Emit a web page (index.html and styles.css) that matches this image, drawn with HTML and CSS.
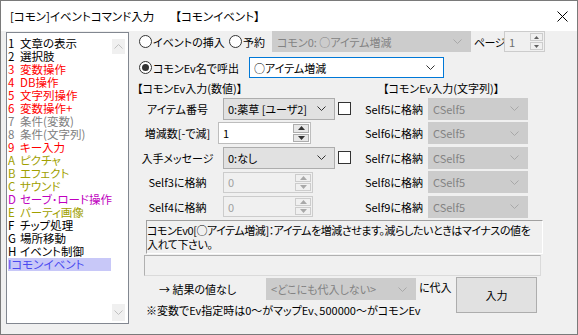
FILE: index.html
```html
<!DOCTYPE html>
<html lang="ja">
<head>
<meta charset="utf-8">
<link rel="stylesheet" href="styles.css">
</head>
<body>
<div class="window">
  <div class="titlebar">
    <span class="title">[コモン]イベントコマンド入力</span>
    <span class="title2">【コモンイベント】</span>
    <svg class="close" width="11" height="11" viewBox="0 0 11 11"><path d="M0.5 0.5 L10.5 10.5 M10.5 0.5 L0.5 10.5" stroke="#000" stroke-width="1" fill="none"/></svg>
  </div>
  <div class="body">
    <div class="list">
      <div class="items">
        <div class="item c-black"><span class="k">1</span>文章の表示</div>
        <div class="item c-black"><span class="k">2</span>選択肢</div>
        <div class="item c-red"><span class="k">3</span>変数操作</div>
        <div class="item c-red"><span class="k">4</span>DB操作</div>
        <div class="item c-red"><span class="k">5</span>文字列操作</div>
        <div class="item c-red"><span class="k">6</span>変数操作+</div>
        <div class="item c-gray"><span class="k">7</span>条件(変数)</div>
        <div class="item c-gray"><span class="k">8</span>条件(文字列)</div>
        <div class="item c-red"><span class="k">9</span>キー入力</div>
        <div class="item c-olive"><span class="k">A</span>ピクチャ</div>
        <div class="item c-olive"><span class="k">B</span>エフェクト</div>
        <div class="item c-olive"><span class="k">C</span>サウンド</div>
        <div class="item c-mag"><span class="k">D</span>セーブ･ロード操作</div>
        <div class="item c-olive"><span class="k">E</span>パーティ画像</div>
        <div class="item c-black"><span class="k">F</span>チップ処理</div>
        <div class="item c-black"><span class="k">G</span>場所移動</div>
        <div class="item c-black"><span class="k">H</span>イベント制御</div>
        <div class="item sel">Iコモンイベント</div>
      </div>
      <div class="scrollbar">
        <div class="sbtn sbtn-top"><svg width="9" height="5" viewBox="0 0 9 5"><path d="M0.5 4.5 L4.5 0.5 L8.5 4.5" stroke="#c0c0c0" fill="none"/></svg></div>
        <div class="sbtn sbtn-bot"><svg width="9" height="5" viewBox="0 0 9 5"><path d="M0.5 0.5 L4.5 4.5 L8.5 0.5" stroke="#c0c0c0" fill="none"/></svg></div>
      </div>
    </div>

    <div class="main">
      <div class="row1">
        <span class="radio"></span>
        <span class="lbl lbl-insert">イベントの挿入</span>
        <span class="radio radio2"></span>
        <span class="lbl lbl-yoyaku">予約</span>
        <div class="combo dis combo-top">
          <span>コモン0: ○アイテム増減</span>
          <svg width="9" height="5" viewBox="0 0 9 5"><path d="M0.5 0.5 L4.5 4.5 L8.5 0.5" stroke="#a8a8a8" fill="none"/></svg>
        </div>
        <span class="lbl lbl-page">ページ</span>
        <div class="spin spin-page">
          <span class="spin-field">1</span>
          <div class="spin-btns">
            <span class="sb"><svg width="5" height="3" viewBox="0 0 5 3"><path d="M2.5 0 L5 3 L0 3 Z" fill="#606060"/></svg></span>
            <span class="sb"><svg width="5" height="3" viewBox="0 0 5 3"><path d="M0 0 L5 0 L2.5 3 Z" fill="#606060"/></svg></span>
          </div>
        </div>
      </div>

      <div class="row2">
        <span class="radio checked"></span>
        <span class="lbl lbl-call">コモンEv名で呼出</span>
        <div class="combo focus combo-name">
          <span>○アイテム増減</span>
          <svg width="9" height="5" viewBox="0 0 9 5"><path d="M0.5 0.5 L4.5 4.5 L8.5 0.5" stroke="#333" fill="none"/></svg>
        </div>
      </div>

      <div class="headers">
        <span class="hdr-left">【コモンEv入力(数値)】</span>
        <span class="hdr-right">【コモンEv入力(文字列)】</span>
      </div>

      <div class="grid">
        <span class="glabel">アイテム番号</span>
        <div class="gctrl">
          <div class="combo en combo-mid">
            <span>0:薬草 [ユーザ2]</span>
            <svg width="9" height="5" viewBox="0 0 9 5"><path d="M0.5 0.5 L4.5 4.5 L8.5 0.5" stroke="#333" fill="none"/></svg>
          </div>
          <span class="check"></span>
        </div>
        <span class="rlabel">Self5に格納</span>
        <div class="combo dis combo-r"><span>CSelf5</span><svg width="9" height="5" viewBox="0 0 9 5"><path d="M0.5 0.5 L4.5 4.5 L8.5 0.5" stroke="#a8a8a8" fill="none"/></svg></div>

        <span class="glabel">増減数[-で減]</span>
        <div class="gctrl">
          <div class="spin spin-en">
            <span class="spin-field">1</span>
            <div class="spin-btns">
              <span class="sb"><svg width="7" height="4" viewBox="0 0 7 4"><path d="M3.5 0 L7 4 L0 4 Z" fill="#333"/></svg></span>
              <span class="sb"><svg width="7" height="4" viewBox="0 0 7 4"><path d="M0 0 L7 0 L3.5 4 Z" fill="#333"/></svg></span>
            </div>
          </div>
        </div>
        <span class="rlabel">Self6に格納</span>
        <div class="combo dis combo-r"><span>CSelf5</span><svg width="9" height="5" viewBox="0 0 9 5"><path d="M0.5 0.5 L4.5 4.5 L8.5 0.5" stroke="#a8a8a8" fill="none"/></svg></div>

        <span class="glabel">入手メッセージ</span>
        <div class="gctrl">
          <div class="combo en combo-mid">
            <span>0:なし</span>
            <svg width="9" height="5" viewBox="0 0 9 5"><path d="M0.5 0.5 L4.5 4.5 L8.5 0.5" stroke="#333" fill="none"/></svg>
          </div>
          <span class="check"></span>
        </div>
        <span class="rlabel">Self7に格納</span>
        <div class="combo dis combo-r"><span>CSelf5</span><svg width="9" height="5" viewBox="0 0 9 5"><path d="M0.5 0.5 L4.5 4.5 L8.5 0.5" stroke="#a8a8a8" fill="none"/></svg></div>

        <span class="glabel">Self3に格納</span>
        <div class="gctrl">
          <div class="spin spin-dis">
            <span class="spin-field">0</span>
            <div class="spin-btns">
              <span class="sb"><svg width="7" height="4" viewBox="0 0 7 4"><path d="M3.5 0 L7 4 L0 4 Z" fill="#a8a8a8"/></svg></span>
              <span class="sb"><svg width="7" height="4" viewBox="0 0 7 4"><path d="M0 0 L7 0 L3.5 4 Z" fill="#a8a8a8"/></svg></span>
            </div>
          </div>
        </div>
        <span class="rlabel">Self8に格納</span>
        <div class="combo dis combo-r"><span>CSelf5</span><svg width="9" height="5" viewBox="0 0 9 5"><path d="M0.5 0.5 L4.5 4.5 L8.5 0.5" stroke="#a8a8a8" fill="none"/></svg></div>

        <span class="glabel">Self4に格納</span>
        <div class="gctrl">
          <div class="spin spin-dis">
            <span class="spin-field">0</span>
            <div class="spin-btns">
              <span class="sb"><svg width="7" height="4" viewBox="0 0 7 4"><path d="M3.5 0 L7 4 L0 4 Z" fill="#a8a8a8"/></svg></span>
              <span class="sb"><svg width="7" height="4" viewBox="0 0 7 4"><path d="M0 0 L7 0 L3.5 4 Z" fill="#a8a8a8"/></svg></span>
            </div>
          </div>
        </div>
        <span class="rlabel">Self9に格納</span>
        <div class="combo dis combo-r"><span>CSelf5</span><svg width="9" height="5" viewBox="0 0 9 5"><path d="M0.5 0.5 L4.5 4.5 L8.5 0.5" stroke="#a8a8a8" fill="none"/></svg></div>
      </div>

      <div class="desc">コモンEv0[○アイテム増減]：アイテムを増減させます。減らしたいときはマイナスの値を<br>入れて下さい。</div>
      <div class="emptybox"></div>

      <div class="bottom">
        <div class="bottom-left">
          <div class="bline1">
            <span class="lbl lbl-result">→ 結果の値なし</span>
            <div class="combo dis combo-assign">
              <span>&lt;どこにも代入しない&gt;</span>
              <svg width="9" height="5" viewBox="0 0 9 5"><path d="M0.5 0.5 L4.5 4.5 L8.5 0.5" stroke="#a8a8a8" fill="none"/></svg>
            </div>
            <span class="lbl lbl-assign">に代入</span>
          </div>
          <div class="note">※変数でEv指定時は0～がマップEv、500000～がコモンEv</div>
        </div>
        <div class="button">入力</div>
      </div>
    </div>
  </div>
</div>
</body>
</html>
```

FILE: styles.css
```css
html, body {
  margin: 0;
  padding: 0;
  background: #ffffff;
}

.window {
  width: 578px;
  height: 335px;
  box-sizing: border-box;
  border: 1px solid #7a7a7a;
  display: flex;
  flex-direction: column;
  font-family: "Noto Sans CJK JP", "Noto Sans", sans-serif;
  font-size: 11px;
  color: #000;
  font-feature-settings: "palt";
  overflow: hidden;
}

.titlebar {
  height: 30px;
  flex: none;
  background: #fff;
  display: flex;
  align-items: center;
  padding-left: 9px;
  font-size: 11.5px;
}

.title2 {
  margin-left: 21px;
}

.close {
  margin-left: auto;
  margin-right: 9px;
  display: block;
}

.body {
  flex: 1;
  background: #f0f0f0;
  display: flex;
  padding-left: 5px;
}

/* ---------- list ---------- */
.list {
  width: 123px;
  height: 292px;
  margin-top: 1px;
  box-sizing: border-box;
  border: 1px solid #828790;
  background: #fff;
  display: flex;
  flex: none;
}

.items {
  width: 103px;
  margin-left: 1px;
  padding-top: 4px;
}

.item {
  height: 13px;
  line-height: 13px;
  white-space: nowrap;
  font-size: 11.5px;
}

.k {
  display: inline-block;
  width: 12px;
}

.c-black { color: #000; }
.c-red { color: #ff0000; }
.c-gray { color: #808080; }
.c-olive { color: #a0a000; }
.c-mag { color: #c000c0; }
.sel {
  background: #c8c8f8;
  color: #4a4af0;
}

.scrollbar {
  width: 17px;
  display: flex;
  flex-direction: column;
  justify-content: space-between;
}

.sbtn {
  width: 13px;
  height: 15px;
  margin-left: 1px;
  background: #f0f0f0;
  display: flex;
  align-items: center;
  justify-content: center;
}

.sbtn-top { margin-top: 6px; }
.sbtn-bot { margin-bottom: 2px; height: 17px; }

/* ---------- main ---------- */
.main {
  flex: 1;
  display: flex;
  flex-direction: column;
  padding-left: 8px;
}

.lbl {
  display: inline-block;
  white-space: nowrap;
  line-height: 16px;
}

.row1 {
  height: 21px;
  display: flex;
  align-items: center;
  padding-left: 2px;
}

.row2 {
  height: 21px;
  margin-top: 5px;
  display: flex;
  align-items: center;
  padding-left: 2px;
}

.radio {
  width: 13px;
  height: 13px;
  box-sizing: border-box;
  border: 1px solid #333;
  border-radius: 50%;
  background: #fff;
  flex: none;
  display: flex;
  align-items: center;
  justify-content: center;
}

.radio.checked::after {
  content: "";
  width: 7px;
  height: 7px;
  border-radius: 50%;
  background: #333;
}

.radio2 { margin-left: 2px; }

.lbl-insert { width: 74px; margin-left: 1px; }
.lbl-yoyaku { width: 26px; margin-left: 1px; }
.lbl-page { width: 29px; margin-left: 3px; letter-spacing: -0.6px; }
.lbl-call { width: 96px; margin-left: 1px; }

.combo {
  box-sizing: border-box;
  height: 21px;
  display: flex;
  align-items: center;
  justify-content: space-between;
  padding: 0 8px 0 4px;
  white-space: nowrap;
  flex: none;
}

.combo svg { display: block; flex: none; }

.combo.dis {
  background: #cccccc;
  border: 1px solid #cccccc;
  color: #838383;
}

.combo.en {
  background: #e1e1e1;
  border: 1px solid #adadad;
  color: #000;
}

.combo.focus {
  background: #fff;
  border: 1px solid #0078d7;
  color: #000;
}

.combo-top { width: 199px; margin-left: 3px; }
.combo-name { width: 195px; }
.combo-mid { width: 112px; height: 22px; margin-left: 5px; }
.combo-r { width: 100px; height: 22px; }
.combo-assign { width: 150px; height: 22px; }

.spin {
  box-sizing: border-box;
  display: flex;
  flex: none;
}

.spin-field {
  flex: 1;
  display: flex;
  align-items: center;
  padding-left: 4px;
}

.spin-btns {
  display: flex;
  flex-direction: column;
  justify-content: center;
  gap: 1px;
  padding: 1px 1px 1px 0;
}

.sb {
  box-sizing: border-box;
  flex: 1;
  display: flex;
  align-items: center;
  justify-content: center;
}

.sb svg { display: block; }

.spin-page {
  width: 41px;
  height: 21px;
  margin-left: 1px;
  border: 1px solid #cccccc;
  background: #f0f0f0;
  color: #6d6d6d;
}

.spin-page .sb {
  width: 13px;
  border: 1px solid #cccccc;
  background: #f0f0f0;
}

.spin-en {
  width: 93px;
  height: 22px;
  border: 1px solid #bdbdbd;
  background: #fff;
}

.spin-en .sb {
  width: 16px;
  border: 1px solid #adadad;
  background: #e8e8e8;
}

.spin-dis {
  width: 90px;
  height: 21px;
  margin-left: 5px;
  border: 1px solid #cccccc;
  background: #f0f0f0;
  color: #a0a0a0;
}

.spin-dis .sb {
  width: 16px;
  border: 1px solid #cccccc;
  background: #f0f0f0;
}

.headers {
  height: 20px;
  display: flex;
  align-items: center;
  white-space: nowrap;
}

.hdr-left { width: 246px; }

.grid {
  display: grid;
  grid-template-columns: 81px 132px 78px 100px;
  grid-template-rows: repeat(5, 21px);
  row-gap: 3.5px;
  align-items: center;
  height: 119px;
}

.glabel {
  text-align: center;
  white-space: nowrap;
}

.gctrl {
  display: flex;
  align-items: center;
}

.rlabel {
  text-align: right;
  padding-right: 5px;
  white-space: nowrap;
}

.check {
  width: 13px;
  height: 13px;
  box-sizing: border-box;
  border: 1px solid #333;
  background: #fff;
  margin-left: 3px;
  flex: none;
}

.desc {
  box-sizing: border-box;
  width: 397px;
  height: 34px;
  margin-top: 3px;
  margin-left: 9px;
  border-style: solid;
  border-width: 1px;
  border-color: #a0a0a0 #ffffff #ffffff #a0a0a0;
  line-height: 14px;
  padding: 2px 0 0 0;
  white-space: nowrap;
  overflow: hidden;
  letter-spacing: -0.45px;
}

.emptybox {
  box-sizing: border-box;
  width: 397px;
  height: 21px;
  margin-top: 1px;
  margin-left: 7px;
  border-style: solid;
  border-width: 1px;
  border-color: #b0b0b0 #dadada #dadada #b0b0b0;
}

.bottom {
  margin-top: 1px;
  display: flex;
}

.bottom-left {
  width: 319px;
  display: flex;
  flex-direction: column;
}

.bline1 {
  height: 24px;
  display: flex;
  align-items: flex-start;
}

.lbl-result {
  width: 107px;
  margin-left: 22px;
  margin-top: 4px;
}

.combo-assign { margin-top: 1px; }

.lbl-assign {
  margin-left: 3px;
  margin-top: 2px;
}

.note {
  margin-left: 9px;
  height: 18px;
  line-height: 18px;
  white-space: nowrap;
}

.button {
  box-sizing: border-box;
  width: 81px;
  height: 36px;
  background: #e1e1e1;
  border: 1px solid #adadad;
  display: flex;
  align-items: center;
  justify-content: center;
}
```
